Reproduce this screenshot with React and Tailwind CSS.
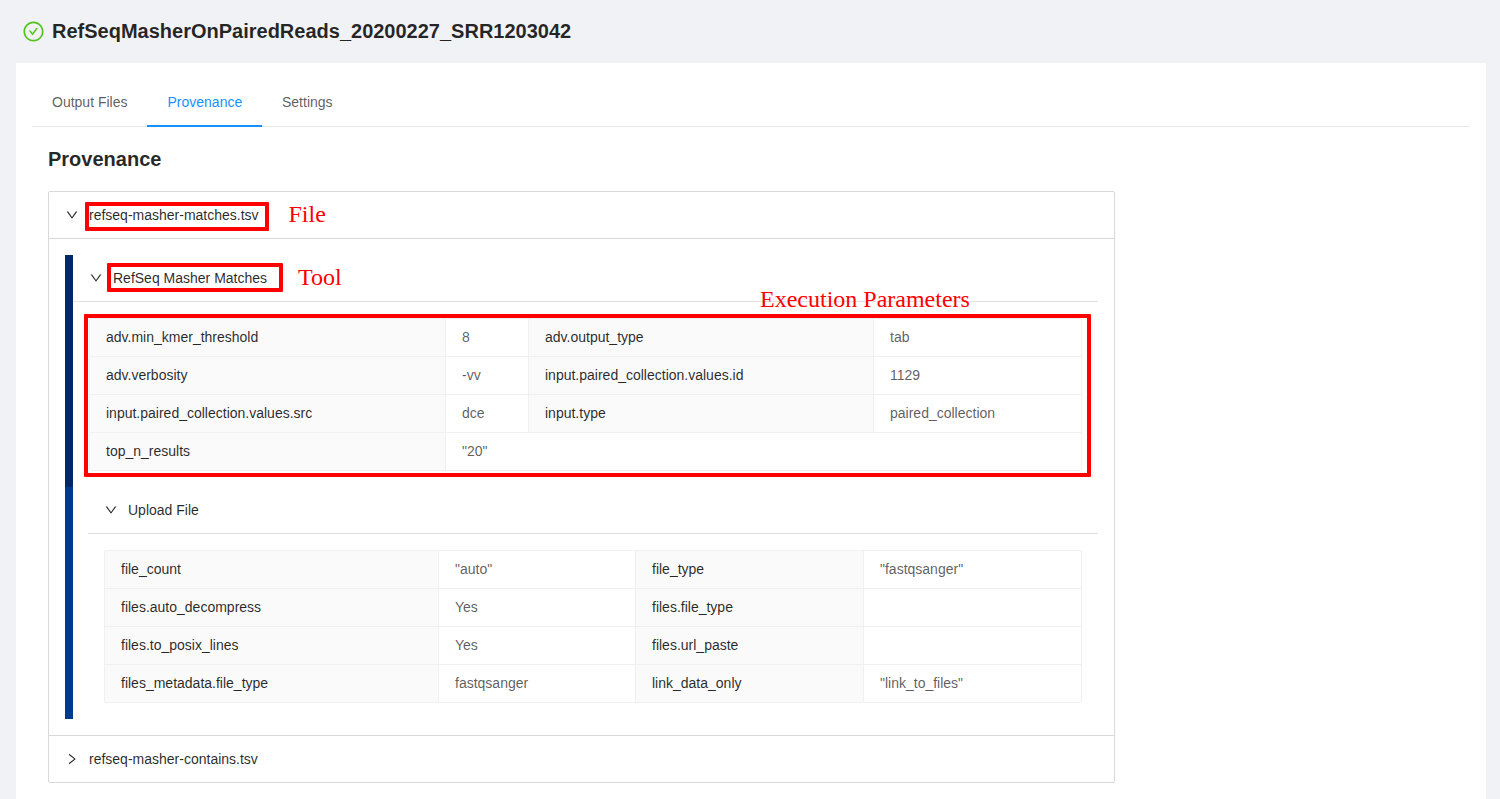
import React from "react";
import { AiOutlineCheckCircle, AiOutlineDown, AiOutlineRight } from "react-icons/ai";

const toolParams = [
  ["adv.min_kmer_threshold", "8", "adv.output_type", "tab"],
  ["adv.verbosity", "-vv", "input.paired_collection.values.id", "1129"],
  ["input.paired_collection.values.src", "dce", "input.type", "paired_collection"],
  ["top_n_results", '"20"'],
];

const uploadParams = [
  ["file_count", '"auto"', "file_type", '"fastqsanger"'],
  ["files.auto_decompress", "Yes", "files.file_type", ""],
  ["files.to_posix_lines", "Yes", "files.url_paste", ""],
  ["files_metadata.file_type", "fastqsanger", "link_data_only", '"link_to_files"'],
];

const ParamTable = ({ rows, columns }) => (
  <div className={`grid ${columns} border border-[#f0f0f0] rounded-[2px] overflow-hidden`}>
    {rows.map((row, i) => {
      const isLast = i === rows.length - 1;
      const rowClass = isLast ? "h-[37px]" : "h-[38px] border-b border-[#f0f0f0]";
      return (
        <React.Fragment key={i}>
          <div className={`px-4 pt-2 bg-[#fafafa] border-r border-[#f0f0f0] text-[#000000d9] ${rowClass}`}>
            {row[0]}
          </div>
          {row.length === 2 ? (
            <div className={`col-span-3 px-4 pt-2 text-[#000000a6] ${rowClass}`}>{row[1]}</div>
          ) : (
            <>
              <div className={`px-4 pt-2 border-r border-[#f0f0f0] text-[#000000a6] ${rowClass}`}>{row[1]}</div>
              <div className={`px-4 pt-2 bg-[#fafafa] border-r border-[#f0f0f0] text-[#000000d9] ${rowClass}`}>
                {row[2]}
              </div>
              <div className={`px-4 pt-2 text-[#000000a6] ${rowClass}`}>{row[3]}</div>
            </>
          )}
        </React.Fragment>
      );
    })}
  </div>
);

const App = () => {
  return (
    <div className="relative h-[799px] overflow-hidden bg-[#f0f2f5] text-sm font-['Liberation_Sans',Arial,sans-serif] text-[#000000d9]">
      {/* Page title */}
      <div className="flex items-center h-[63px] pl-[22px] pb-[1px]">
        <AiOutlineCheckCircle className="text-[#52c41a] mr-[7px]" size={23} />
        <h1 className="text-xl font-semibold leading-7 text-[#000000d9]">
          RefSeqMasherOnPairedReads_20200227_SRR1203042
        </h1>
      </div>

      <div className="ml-4 w-[1470px] bg-white px-4 h-[736px]">
        {/* Tabs */}
        <div className="flex h-[64px] border-b border-[#e8e8e8]">
          <div className="pl-5 pt-[29px] w-[115px] whitespace-nowrap text-[#000000a6]">Output Files</div>
          <div className="pl-[20.5px] pt-[29px] w-[115px] h-[64px] text-[#1890ff] border-b-2 border-[#1890ff]">Provenance</div>
          <div className="pl-5 pt-[29px] text-[#000000a6]">Settings</div>
        </div>

        <div className="px-4">
          <h2 className="text-xl font-semibold leading-7 mt-[18px] mb-[18px] text-[#000000d9]">Provenance</h2>

          {/* Files */}
          <div className="w-[1067px] border border-[#d9d9d9] rounded-[2px]">
            <div className="flex items-center h-[47px] px-4 border-b border-[#d9d9d9]">
              <AiOutlineDown size={14} className="mr-[10px]" />
              <span>refseq-masher-matches.tsv</span>
            </div>

            <div className="px-4 pt-4 pb-4 border-b border-[#d9d9d9]">
              {/* Tool */}
              <div className="border-l-8 border-[#002766]">
                <div className="flex items-center h-[47px] pl-4 border-b border-[#e0e0e0]">
                  <AiOutlineDown size={14} className="mr-[10px]" />
                  <span>RefSeq Masher Matches</span>
                </div>
                <div className="pt-4 px-4 pb-4">
                  <ParamTable rows={toolParams} columns="grid-cols-[356px_83px_345px_1fr]" />
                </div>
              </div>

              {/* Upload step */}
              <div className="border-l-8 border-[#003a8c]">
                <div className="ml-[15px]">
                  <div className="flex items-center h-[47px] pl-4 border-b border-[#e0e0e0]">
                    <AiOutlineDown size={14} className="mr-[10px]" />
                    <span>Upload File</span>
                  </div>
                  <div className="p-4">
                    <ParamTable rows={uploadParams} columns="grid-cols-[334px_197px_228px_1fr]" />
                  </div>
                </div>
              </div>
            </div>

            <div className="flex items-center h-[46px] px-4">
              <AiOutlineRight size={14} className="mr-[10px]" />
              <span>refseq-masher-contains.tsv</span>
            </div>
          </div>
        </div>
      </div>

      {/* Red annotations drawn over the page */}
      <div className="absolute left-[85px] top-[202px] w-[184px] h-[29px] border-4 border-[#ff0000] rounded-[1px]" />
      <div className="absolute left-[107px] top-[263px] w-[176px] h-[29px] border-4 border-[#ff0000] rounded-[1px]" />
      <div className="absolute left-[84px] top-[314px] w-[1007px] h-[163px] border-4 border-[#ff0000] rounded-[1px]" />
      <span className="absolute left-[288.5px] top-[200px] text-2xl leading-7 text-[#ff0000] font-['Liberation_Serif',serif]">File</span>
      <span className="absolute left-[298px] top-[263px] text-2xl leading-7 text-[#ff0000] font-['Liberation_Serif',serif]">Tool</span>
      <span className="absolute left-[760px] top-[285px] text-2xl leading-7 text-[#ff0000] font-['Liberation_Serif',serif]">Execution Parameters</span>
    </div>
  );
};

export default App;
